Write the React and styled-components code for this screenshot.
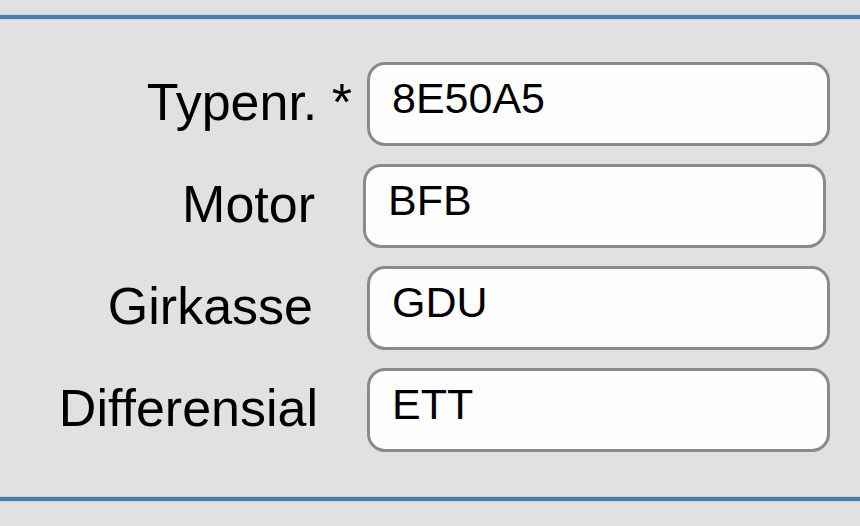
import React from "react";
import styled, { createGlobalStyle } from "styled-components";

const GlobalStyle = createGlobalStyle`
  html, body {
    margin: 0;
    padding: 0;
    background: #e1e1e1;
  }
  body {
    font-family: "Liberation Sans", Arial, sans-serif;
  }
`;

const fields = [
  { label: "Typenr. *", value: "8E50A5", labelPad: 0, shift: 0 },
  { label: "Motor", value: "BFB", labelPad: 37, shift: -4 },
  { label: "Girkasse", value: "GDU", labelPad: 39, shift: 0 },
  { label: "Differensial", value: "ETT", labelPad: 34, shift: 0 },
];

const App = () => {
  return (
    <Page>
      <GlobalStyle />
      <Rule />
      <Form>
        {fields.map((f) => (
          <Row key={f.label}>
            <Label $pad={f.labelPad}>{f.label}</Label>
            <Field $shift={f.shift} value={f.value} readOnly />
          </Row>
        ))}
      </Form>
      <Rule />
    </Page>
  );
};

const Page = styled.div`
  width: 860px;
  height: 526px;
  background: #e1e1e1;
  display: flex;
  flex-direction: column;
  padding-top: 15px;
  box-sizing: border-box;
`;

const Rule = styled.div`
  height: 4px;
  background: #4f7ca6;
  box-shadow: 0 0 1px 1px #c6d6e6;
`;

const Form = styled.div`
  display: flex;
  flex-direction: column;
  gap: 18px;
  padding: 43px 0 45px;
`;

const Row = styled.div`
  display: grid;
  grid-template-columns: 352px 463px;
  column-gap: 15px;
  align-items: center;
`;

const Label = styled.label`
  justify-self: end;
  padding-right: ${(p) => p.$pad}px;
  padding-bottom: 4px;
  font-size: 52px;
  color: #000;
  white-space: nowrap;
`;

const Field = styled.input`
  box-sizing: border-box;
  width: 463px;
  height: 84px;
  margin: 0 0 0 ${(p) => p.$shift}px;
  padding: 0 0 12px 22px;
  border: 3px solid #8a8a8e;
  border-radius: 18px;
  background: #fefefe;
  font-family: "Liberation Sans", Arial, sans-serif;
  font-size: 43px;
  color: #000;
  outline: none;
`;

export default App;
